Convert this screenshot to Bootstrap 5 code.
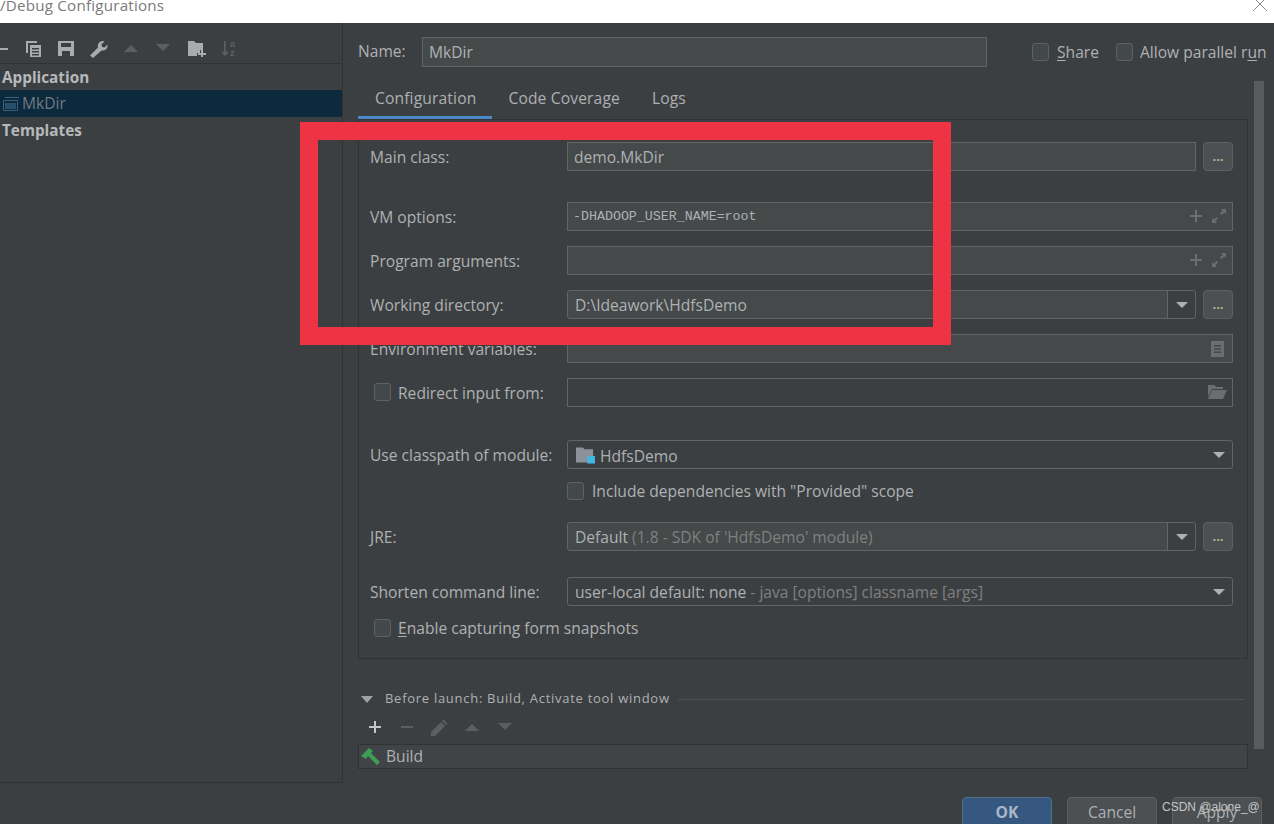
<!DOCTYPE html>
<html lang="en">
<head>
    <meta charset="UTF-8">
    <title>Debug Configurations</title>
    <link rel="stylesheet" href="https://cdn.jsdelivr.net/npm/bootstrap@5.3.0/dist/css/bootstrap.min.css">
    <style>
        html, body { height: 824px; overflow: hidden; }
        body { background: #3c3f41; color: #aeb1b3; font-family: "Open Sans", "Noto Sans", sans-serif; font-size: 15.6px; position: relative; }
        svg { display: block; flex: none; }
        .title-bar { height: 23px; background: #fff; overflow: hidden; position: relative; color: #7a7a7a; }
        .title-text { margin-top: -7px; line-height: 24px; letter-spacing: .2px; font-size: 15.2px; }
        .close-x { position: absolute; left: 1252px; top: -4px; }
        .dlg-body { height: 760px; }
        .side { width: 343px; height: 760px; border-right: 1px solid #323232; border-bottom: 1px solid #323232; }
        .side-tools { height: 41px; border-bottom: 1px solid #323232; position: relative; }
        .side-tools svg { position: absolute; top: 17px; }
        .tree-head { height: 26px; line-height: 27px; padding-left: 2px; font-weight: 700; color: #b6b9bb; font-size: 15.3px; }
        .tree-sel { height: 27px; background: #0d293e; color: #6f7a82; padding-left: 2px; gap: 2px; }
        .main-col { width: 931px; padding-left: 15px; position: relative; }
        .name-row { height: 29px; margin-top: 14px; }
        .name-lab { width: 64px; padding-top: 1px; }
        .name-input { width: 565px; height: 30px; line-height: 29px; background: #45494a; border: 1px solid #646464; padding-left: 6px; color: #aeb1b3; }
        .chk { width: 17px; height: 18px; background: #43494a; border: 1px solid #5f6263; border-radius: 3px; flex: none; }
        .chk-lab { padding-top: 2px; }
        .share-chk { margin-left: 45px; margin-right: 8px; }
        .par-chk { margin-left: 17px; margin-right: 7px; }
        .tabs { height: 37px; margin-top: 16px; width: 889px; }
        .tab-item { padding: 0 16px; height: 37px; line-height: 33px; letter-spacing: .15px; }
        .tab-on { border-bottom: 3px solid #4a88c7; padding-left: 17px; }
        .cfg-panel { width: 890px; height: 540px; border: 1px solid #323232; padding: 22px 14px 0 11px; }
        .frow { height: 29px; margin-top: 15px; }
        .flab { width: 197px; flex: none; padding-top: 2px; }
        .fbox { height: 29px; background: #45494a; border: 1px solid #646464; flex: 1; padding-left: 6px; line-height: 28px; white-space: nowrap; position: relative; }
        .fbox-plain { background: #3c3f41; }
        .fmono { font-family: "Liberation Mono", monospace; font-size: 13.3px; padding-left: 5px; }
        .combo { height: 29px; background: #3c3f41; border: 1px solid #646464; border-radius: 3px; flex: 1; padding-left: 7px; line-height: 28px; position: relative; white-space: nowrap; }
        .combo-on { background: #45494a; }
        .dim { color: #808080; }
        .tri { width: 0; height: 0; border-left: 6px solid transparent; border-right: 6px solid transparent; border-top: 6px solid #aeb1b3; position: absolute; right: 7px; top: 11px; }
        .split { position: absolute; top: 0; bottom: 0; right: 0; width: 28px; border-left: 1px solid #646464; background: #3c3f41; border-radius: 0 3px 3px 0; }
        .dots { width: 30px; height: 29px; margin-left: 7px; background: #4c5052; border: 1px solid #5e6060; border-radius: 4px; flex: none; text-align: center; line-height: 27px; color: #c0b090; font-size: 13px; font-weight: 700; }
        .ico-r { position: absolute; top: 5px; }
        .before-head { height: 20px; margin-top: 30px; font-size: 13px; letter-spacing: .72px; gap: 12px; }
        .tri-sm { width: 0; height: 0; border-left: 6px solid transparent; border-right: 6px solid transparent; border-top: 7px solid #9fa2a4; margin-left: 3px; }
        .before-line { flex: 1; border-top: 1px solid #4f5254; margin-left: -4px; margin-right: 30px; }
        .before-tools { height: 20px; margin-top: 10px; position: relative; }
        .before-tools svg { position: absolute; top: 0; }
        .build-list { width: 890px; height: 25px; margin-top: 5px; background: #414446; border: 1px solid #323232; gap: 4px; }
        .dlg-btns { margin-top: 28px; gap: 15px; padding-left: 604px; }
        .dlg-btn { width: 90px; height: 34px; background: #4c5052; border: 1px solid #5e6060; border-radius: 4px; text-align: center; line-height: 29px; color: #aeb1b3; }
        .dlg-ok { background: #365880; border-color: #4c708c; font-weight: 700; color: #a9b7c6; }
        .scroll-thumb { position: absolute; left: 1254px; top: 81px; width: 10px; height: 668px; background: #595b5d; }
        .red-box { position: absolute; left: 300px; top: 122px; width: 651px; height: 223px; border: 18px solid #ee3344; }
        .watermark { position: absolute; left: 1162px; top: 798px; font-family: "Liberation Sans", sans-serif; font-size: 12px; color: #c4c4c4; }
        u { text-underline-offset: 2px; }
    </style>
</head>
<body>
    <svg width="0" height="0" class="position-absolute">
        <symbol id="up" viewBox="0 0 16 16"><path d="M1 12 8 5l7 7z" fill="#5c5f61"/></symbol>
        <symbol id="down" viewBox="0 0 16 16"><path d="M1 4l7 7 7-7z" fill="#5c5f61"/></symbol>
        <symbol id="plus" viewBox="0 0 16 16"><path d="M7 2h2v5h5v2H9v5H7V9H2V7h5z" fill="#6b6e70"/></symbol>
        <symbol id="expand" viewBox="0 0 16 16"><path d="M10 1h5v5l-1.700-1.700L10.500 7 9 5.500 11.700 2.700zM1 15v-5l1.700 1.700L5.500 9 7 10.500 4.300 13.300 6 15z" fill="#6b6e70"/></symbol>
    </svg>

    <div class="title-bar">
        <div class="title-text">/Debug Configurations</div>
        <svg class="close-x" width="16" height="16" viewBox="0 0 16 16"><path d="M1 1l14 14M15 1 1 15" stroke="#8a8a8a" stroke-width="1" fill="none"/></svg>
    </div>

    <div class="dlg-body d-flex">
        <!-- Left tree -->
        <div class="side">
            <div class="side-tools">
                <svg style="left:0" width="9" height="18" viewBox="0 0 9 18"><path d="M0 8h8v2H0z" fill="#a9abad"/></svg>
                <svg style="left:25px" width="17" height="18" viewBox="0 0 17 18"><path d="M1 1h11v2H3v10H1z" fill="#a9abad"/><path fill-rule="evenodd" d="M5 5h11v12H5zm2 3v1.500h7V8zm0 3v1.500h7V11zm0 3v1.500h7V14z" fill="#a9abad"/></svg>
                <svg style="left:58px" width="16" height="17" viewBox="0 0 16 17"><path fill-rule="evenodd" d="M0 1h16v15H0zm3 2v4h10V3zm1 8v5h8v-5z" fill="#a9abad"/></svg>
                <svg style="left:89px" width="19" height="18" viewBox="0 0 19 18"><path d="M1 15.500 9 7.500C8 4 10.500 1 14 1l1.500.3L12.500 4.500l.6 2.400 2.400.6L18.500 4.500c.6 3.600-2.400 6.700-6 6L4 18z" fill="#a9abad"/></svg>
                <svg style="left:123px" width="16" height="16"><use href="#up"/></svg>
                <svg style="left:155px" width="16" height="16"><use href="#down"/></svg>
                <svg style="left:188px" width="18" height="17" viewBox="0 0 18 17"><path d="M0 1h6l2 2h7v7h-3v3H9v3H0z" fill="#a9abad"/><path d="M13 10h2v3h3v2h-3v2h-2v-2h-3v-2h3z" fill="#a9abad"/></svg>
                <svg style="left:220px" width="17" height="17" viewBox="0 0 17 17"><path d="M4 1h1.500v12L8 10.500V13l-3 3-3-3v-2.500L4 13z" fill="#5f6264"/><text x="10" y="7" font-size="9" font-weight="700" fill="#5f6264" font-family="Liberation Sans">a</text><text x="10" y="16" font-size="9" font-weight="700" fill="#5f6264" font-family="Liberation Sans">z</text></svg>
            </div>
            <div class="tree-head">Application</div>
            <div class="tree-sel d-flex align-items-center">
                <svg width="18" height="16" viewBox="0 0 18 16"><path d="M3 1.500h14M1.500 4.500h14v10h-14z" stroke="#3d6076" stroke-width="1" fill="none"/><path d="M3 7h11v6H3z" fill="#28506b"/></svg>
                <span>MkDir</span>
            </div>
            <div class="tree-head">Templates</div>
        </div>

        <!-- Right side -->
        <div class="main-col">
            <div class="name-row d-flex align-items-center">
                <span class="name-lab">Name:</span>
                <div class="name-input">MkDir</div>
                <div class="chk share-chk"></div><span class="chk-lab"><u>S</u>hare</span>
                <div class="chk par-chk"></div><span class="chk-lab text-nowrap">Allow parallel r<u>u</u>n</span>
            </div>

            <div class="tabs d-flex">
                <div class="tab-item tab-on">Configuration</div>
                <div class="tab-item">Code Coverage</div>
                <div class="tab-item">Logs</div>
            </div>

            <div class="cfg-panel">
                <div class="frow d-flex align-items-center mt-0">
                    <span class="flab">Main class:</span>
                    <div class="fbox">demo.MkDir</div>
                    <div class="dots">...</div>
                </div>
                <div class="frow d-flex align-items-center" style="margin-top:31px">
                    <span class="flab">VM options:</span>
                    <div class="fbox fmono">-DHADOOP_USER_NAME=root
                        <svg class="ico-r" style="right:28px" width="16" height="16"><use href="#plus"/></svg>
                        <svg class="ico-r" style="right:5px" width="16" height="16"><use href="#expand"/></svg>
                    </div>
                </div>
                <div class="frow d-flex align-items-center">
                    <span class="flab">Program arguments:</span>
                    <div class="fbox">
                        <svg class="ico-r" style="right:28px" width="16" height="16"><use href="#plus"/></svg>
                        <svg class="ico-r" style="right:5px" width="16" height="16"><use href="#expand"/></svg>
                    </div>
                </div>
                <div class="frow d-flex align-items-center">
                    <span class="flab">Working directory:</span>
                    <div class="combo combo-on">D:\Ideawork\HdfsDemo<span class="split"><span class="tri"></span></span></div>
                    <div class="dots">...</div>
                </div>
                <div class="frow d-flex align-items-center">
                    <span class="flab">Environment variables:</span>
                    <div class="fbox">
                        <svg class="ico-r" style="right:7px" width="15" height="18" viewBox="0 0 15 18"><path fill-rule="evenodd" d="M1 1h13v16H1zm3 4v1.500h7V5zm0 3.300v1.500h7V8.300zm0 3.300v1.500h7v-1.500z" fill="#6b6e70"/></svg>
                    </div>
                </div>
                <div class="frow d-flex align-items-center">
                    <span class="flab d-flex align-items-center"><span class="chk" style="margin:-2px 7px 0 4px"></span>Redirect input from:</span>
                    <div class="fbox fbox-plain">
                        <svg class="ico-r" style="right:5px" width="20" height="16" viewBox="0 0 20 16"><path d="M1 1h6l2 2h7v2H5L1 13z" fill="#6b6e70"/><path d="M5 6h15l-4 9H1z" fill="#6b6e70"/></svg>
                    </div>
                </div>
                <div class="frow d-flex align-items-center" style="margin-top:33px">
                    <span class="flab">Use classpath of module:</span>
                    <div class="combo d-flex align-items-center" style="gap:5px;padding-left:8px">
                        <svg width="19" height="18" viewBox="0 0 20 18"><path d="M0 1h7l2 2h9v9h-5v5H0z" fill="#8b9299"/><path d="M12 10h8v8h-8z" fill="#40b6e0"/></svg>
                        <span class="chk-lab">HdfsDemo</span>
                        <span class="tri" style="right:7px"></span>
                    </div>
                </div>
                <div class="d-flex align-items-center" style="height:18px;margin:13px 0 0 197px">
                    <div class="chk me-2"></div><span class="chk-lab">Include dependencies with "Provided" scope</span>
                </div>
                <div class="frow d-flex align-items-center" style="margin-top:22px">
                    <span class="flab">JRE:</span>
                    <div class="combo combo-on">Default <span class="dim">(1.8 - SDK of 'HdfsDemo' module)</span><span class="split"><span class="tri"></span></span></div>
                    <div class="dots">...</div>
                </div>
                <div class="frow d-flex align-items-center" style="margin-top:26px">
                    <span class="flab">Shorten command line:</span>
                    <div class="combo">user-local default: none <span class="dim">- java [options] classname [args]</span><span class="tri"></span></div>
                </div>
                <div class="d-flex align-items-center" style="height:18px;margin:13px 0 0 4px">
                    <div class="chk" style="margin-right:7px"></div><span class="chk-lab"><u>E</u>nable capturing form snapshots</span>
                </div>
            </div>

            <div class="before-head d-flex align-items-center">
                <span class="tri-sm"></span><span>Before launch: Build, Activate tool window</span><span class="before-line"></span>
            </div>
            <div class="before-tools">
                <svg style="left:9px" width="16" height="16" viewBox="0 0 16 16"><path d="M7 2h2v5h5v2H9v5H7V9H2V7h5z" fill="#c4c6c8"/></svg>
                <svg style="left:41px" width="16" height="16" viewBox="0 0 16 16"><path d="M2 7h12v2H2z" fill="#5c5f61"/></svg>
                <svg style="left:72px" width="18" height="18" viewBox="0 0 18 18"><path d="M1 13 11 3l4 4L5 17H1zM12 2l1.500-1.500 4 4L16 6z" fill="#5c5f61"/></svg>
                <svg style="left:106px" width="16" height="16"><use href="#up"/></svg>
                <svg style="left:139px" width="16" height="16"><use href="#down"/></svg>
            </div>
            <div class="build-list d-flex align-items-center">
                <svg width="21" height="20" viewBox="0 0 21 20" style="margin-left:2px"><path d="M0 9 8 1l4 3-2 2 9 9-3 3-9-9-2 3z" fill="#3f9c55"/></svg>
                <span>Build</span>
            </div>
            <div class="dlg-btns d-flex">
                <div class="dlg-btn dlg-ok">OK</div>
                <div class="dlg-btn">Cancel</div>
                <div class="dlg-btn">Apply</div>
            </div>
        </div>
    </div>

    <div class="scroll-thumb"></div>
    <div class="red-box"></div>
    <div class="watermark">CSDN @alone_@</div>
</body>
</html>
